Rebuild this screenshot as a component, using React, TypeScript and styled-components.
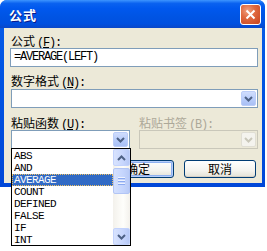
import React from 'react'
import styled, { createGlobalStyle } from 'styled-components'

const GlobalStyle = createGlobalStyle`
  html, body {
    margin: 0;
    padding: 0;
    background: #ffffff;
  }
`

const CJK = `"Noto Sans CJK SC", "Noto Sans", sans-serif`
const MONO = `"Liberation Mono", "DejaVu Sans Mono", monospace`

const Page = styled.div`
  width: 267px;
  height: 251px;
  background: #fff;
`

const Window = styled.div`
  width: 265px;
  height: 187px;
  display: flex;
  flex-direction: column;
  background: linear-gradient(180deg, #0a5ee8 0%, #0054e3 40%, #0047d8 100%);
  border-radius: 7px 7px 0 0;
  font-family: ${CJK};
  font-size: 12px;
  color: #000;
`

const TitleBar = styled.div`
  height: 28px;
  flex-shrink: 0;
  display: flex;
  align-items: center;
  justify-content: space-between;
  padding: 0 4px 0 9px;
  border-radius: 7px 7px 0 0;
  background: linear-gradient(
    180deg,
    #3d95ff 0%,
    #0a62f0 12%,
    #0058ee 30%,
    #0054e3 60%,
    #0050e0 85%,
    #0a47c8 100%
  );
`

const Title = styled.span`
  color: #fff;
  font-weight: 700;
  font-size: 13px;
  letter-spacing: 1px;
  text-shadow: 1px 1px 0 #0a1a8a;
`

const CloseButton = styled.div`
  width: 19px;
  height: 19px;
  border: 1px solid #fff;
  border-radius: 3px;
  background: radial-gradient(circle at 35% 30%, #f0a080 0%, #e06a40 40%, #c8421c 100%);
  display: flex;
  align-items: center;
  justify-content: center;
  margin-top: 1px;
`

const Body = styled.div`
  flex: 1;
  margin: 0 3px 4px 4px;
  background: #ece9d8;
  padding: 5px 4px 0 7px;
  display: flex;
  flex-direction: column;
`

const Label = styled.div<{ $disabled?: boolean }>`
  height: 15px;
  line-height: 15px;
  font-size: 12px;
  white-space: nowrap;
  color: ${({ $disabled }) => ($disabled ? '#aca899' : '#000')};
`

const Key = styled.span`
  font-family: ${MONO};
  font-size: 12px;
  letter-spacing: -1.2px;
  margin-left: 2px;
`

const TextBox = styled.div`
  height: 19px;
  box-sizing: border-box;
  border: 1px solid #7f9db9;
  background: #fff;
  padding: 0 3px;
  font-family: ${MONO};
  font-size: 12px;
  letter-spacing: -1.2px;
  line-height: 17px;
  margin-bottom: 6px;
  margin-left: -1px;
`

const Combo = styled.div<{ $disabled?: boolean }>`
  height: 19px;
  box-sizing: border-box;
  border: 1px solid ${({ $disabled }) => ($disabled ? '#c9c7ba' : '#7f9db9')};
  background: ${({ $disabled }) => ($disabled ? '#ece9d8' : '#fff')};
  display: flex;
  justify-content: flex-end;
  align-items: center;
  padding-right: 1px;
`

const DropButton = styled.div<{ $disabled?: boolean }>`
  width: 15px;
  height: 15px;
  box-sizing: border-box;
  border-radius: 2px;
  border: 1px solid ${({ $disabled }) => ($disabled ? '#e0ded4' : '#bbcdf8')};
  background: ${({ $disabled }) =>
    $disabled
      ? '#f4f3ee'
      : 'linear-gradient(180deg, #d0ddfd 0%, #b6cbfa 60%, #a9c0f5 100%)'};
  display: flex;
  align-items: center;
  justify-content: center;
`

const Row = styled.div`
  display: grid;
  grid-template-columns: 119px 119px;
  column-gap: 9px;
`

const Cell = styled.div`
  position: relative;
  display: flex;
  flex-direction: column;
`

const ButtonRow = styled.div`
  display: flex;
  justify-content: flex-end;
  gap: 10px;
  margin-top: 11px;
  padding-right: 2px;
`

const PushButton = styled.div<{ $default?: boolean }>`
  width: 72px;
  height: 18px;
  box-sizing: border-box;
  border: 1px solid #003c74;
  border-radius: 3px;
  background: linear-gradient(180deg, #ffffff 0%, #f4f3ee 60%, #e3e1d6 100%);
  box-shadow: ${({ $default }) =>
    $default ? 'inset 0 0 0 1px #b6cefa, inset 0 0 0 2px #8eb0f0' : 'inset 0 -1px 0 #d6d0c5'};
  display: flex;
  align-items: center;
  justify-content: center;
  font-size: 12px;
  line-height: 16px;
`

const ListBox = styled.div`
  position: absolute;
  top: 100%;
  left: 0;
  margin-top: -1px;
  width: 120px;
  height: 98px;
  box-sizing: border-box;
  border: 1px solid #000;
  background: #fff;
  display: flex;
  z-index: 5;
`

const Items = styled.div`
  flex: 1;
  padding-top: 1px;
`

const Item = styled.div<{ $selected?: boolean }>`
  height: 12px;
  line-height: 12px;
  padding-left: 2px;
  font-family: ${MONO};
  font-size: 11px;
  letter-spacing: -0.6px;
  box-sizing: border-box;
  color: ${({ $selected }) => ($selected ? '#fff' : '#000')};
  background: ${({ $selected }) => ($selected ? '#316ac5' : 'transparent')};
  outline: ${({ $selected }) => ($selected ? '1px dotted #f0c060' : 'none')};
  outline-offset: -1px;
`

const ScrollBar = styled.div`
  width: 17px;
  display: flex;
  flex-direction: column;
  background: linear-gradient(90deg, #f3f1ec 0%, #fefefb 60%, #f3f1ec 100%);
`

const ScrollButton = styled.div`
  height: 17px;
  box-sizing: border-box;
  border: 1px solid #c3d3fd;
  border-radius: 2px;
  background: linear-gradient(90deg, #d8e3fe 0%, #c7d6fd 60%, #b7c9f6 100%);
  display: flex;
  align-items: center;
  justify-content: center;
`

const Track = styled.div`
  flex: 1;
  padding-top: 2px;
`

const Thumb = styled.div`
  height: 26px;
  box-sizing: border-box;
  border: 1px solid #b2c5f5;
  border-radius: 2px;
  background: linear-gradient(90deg, #d4e0fe 0%, #c5d5fd 60%, #b9cbf6 100%);
  display: flex;
  flex-direction: column;
  align-items: center;
  justify-content: center;
  gap: 1px;
`

const Grip = styled.div`
  width: 7px;
  height: 1px;
  background: #eef3fe;
  border-bottom: 1px solid #8caaf0;
`

const Chevron = ({ up, color = '#4d6185' }: { up?: boolean; color?: string }) => (
  <svg width="9" height="6" viewBox="0 0 9 6">
    <polyline
      points={up ? '1,5 4.5,1.5 8,5' : '1,1 4.5,4.5 8,1'}
      fill="none"
      stroke={color}
      strokeWidth="2"
    />
  </svg>
)

const functions = ['ABS', 'AND', 'AVERAGE', 'COUNT', 'DEFINED', 'FALSE', 'IF', 'INT']

export default function App() {
  return (
    <Page>
      <GlobalStyle />
      <Window>
        <TitleBar>
          <Title>公式</Title>
          <CloseButton>
            <svg width="11" height="11" viewBox="0 0 11 11">
              <path d="M1.5 1.5 L9.5 9.5 M9.5 1.5 L1.5 9.5" stroke="#fff" strokeWidth="2" />
            </svg>
          </CloseButton>
        </TitleBar>
        <Body>
          <Label>
            公式<Key>(<u>F</u>):</Key>
          </Label>
          <TextBox>=AVERAGE(LEFT)</TextBox>
          <Label>
            数字格式<Key>(<u>N</u>):</Key>
          </Label>
          <Combo style={{ marginTop: 1 }}>
            <DropButton>
              <Chevron />
            </DropButton>
          </Combo>
          <Row style={{ marginTop: 7 }}>
            <Cell>
              <Label>
                粘贴函数<Key>(<u>U</u>):</Key>
              </Label>
              <Combo>
                <DropButton>
                  <Chevron />
                </DropButton>
                <ListBox>
                  <Items>
                    {functions.map((f) => (
                      <Item key={f} $selected={f === 'AVERAGE'}>
                        {f}
                      </Item>
                    ))}
                  </Items>
                  <ScrollBar>
                    <ScrollButton>
                      <Chevron up />
                    </ScrollButton>
                    <Track>
                      <Thumb>
                        <Grip />
                        <Grip />
                        <Grip />
                      </Thumb>
                    </Track>
                    <ScrollButton>
                      <Chevron />
                    </ScrollButton>
                  </ScrollBar>
                </ListBox>
              </Combo>
            </Cell>
            <Cell>
              <Label $disabled>
                粘贴书签<Key>(B):</Key>
              </Label>
              <Combo $disabled>
                <DropButton $disabled>
                  <Chevron color="#c9c7ba" />
                </DropButton>
              </Combo>
            </Cell>
          </Row>
          <ButtonRow>
            <PushButton $default>确定</PushButton>
            <PushButton>取消</PushButton>
          </ButtonRow>
        </Body>
      </Window>
    </Page>
  )
}
